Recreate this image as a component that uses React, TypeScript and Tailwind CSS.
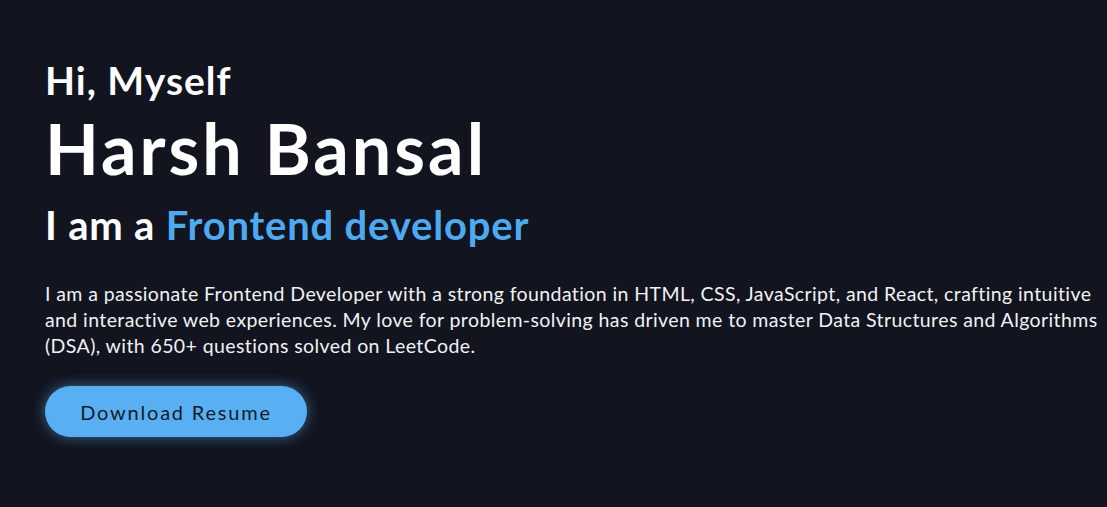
import React from 'react';

const App = () => {
  return (
    <main className="min-h-[507px] w-full overflow-hidden bg-[#12141f] font-['Lato',sans-serif] text-white">
      <section className="px-[45px] pt-[56px]">
        <h3 className="text-[39px] font-bold leading-[48px] tracking-[1px]">Hi, Myself</h3>
        <h1 className="mt-[4px] text-[70px] font-bold leading-[80px] tracking-[3px]">Harsh Bansal</h1>
        <h2 className="mt-[13px] text-[40px] font-bold leading-[48px] tracking-[0.8px]">
          I am a <span className="text-[#4eaaf0]">Frontend developer</span>
        </h2>
        <p className="mt-[32px] w-[1075px] text-[19.5px] leading-[26px] tracking-[0.4px] text-[#f1f1f4]">
          I am a passionate Frontend Developer with a strong foundation in HTML, CSS, JavaScript, and React, crafting
          intuitive and interactive web experiences. My love for problem-solving has driven me to master Data Structures
          and Algorithms (DSA), with 650+ questions solved on LeetCode.
        </p>
        <button className="mt-[27px] h-[51px] w-[262px] rounded-full bg-[#58b0f2] text-[20px] tracking-[1.8px] text-[#161a28] shadow-[0_0_14px_rgba(88,176,242,0.55)]">
          Download Resume
        </button>
      </section>
    </main>
  );
};

export default App;
